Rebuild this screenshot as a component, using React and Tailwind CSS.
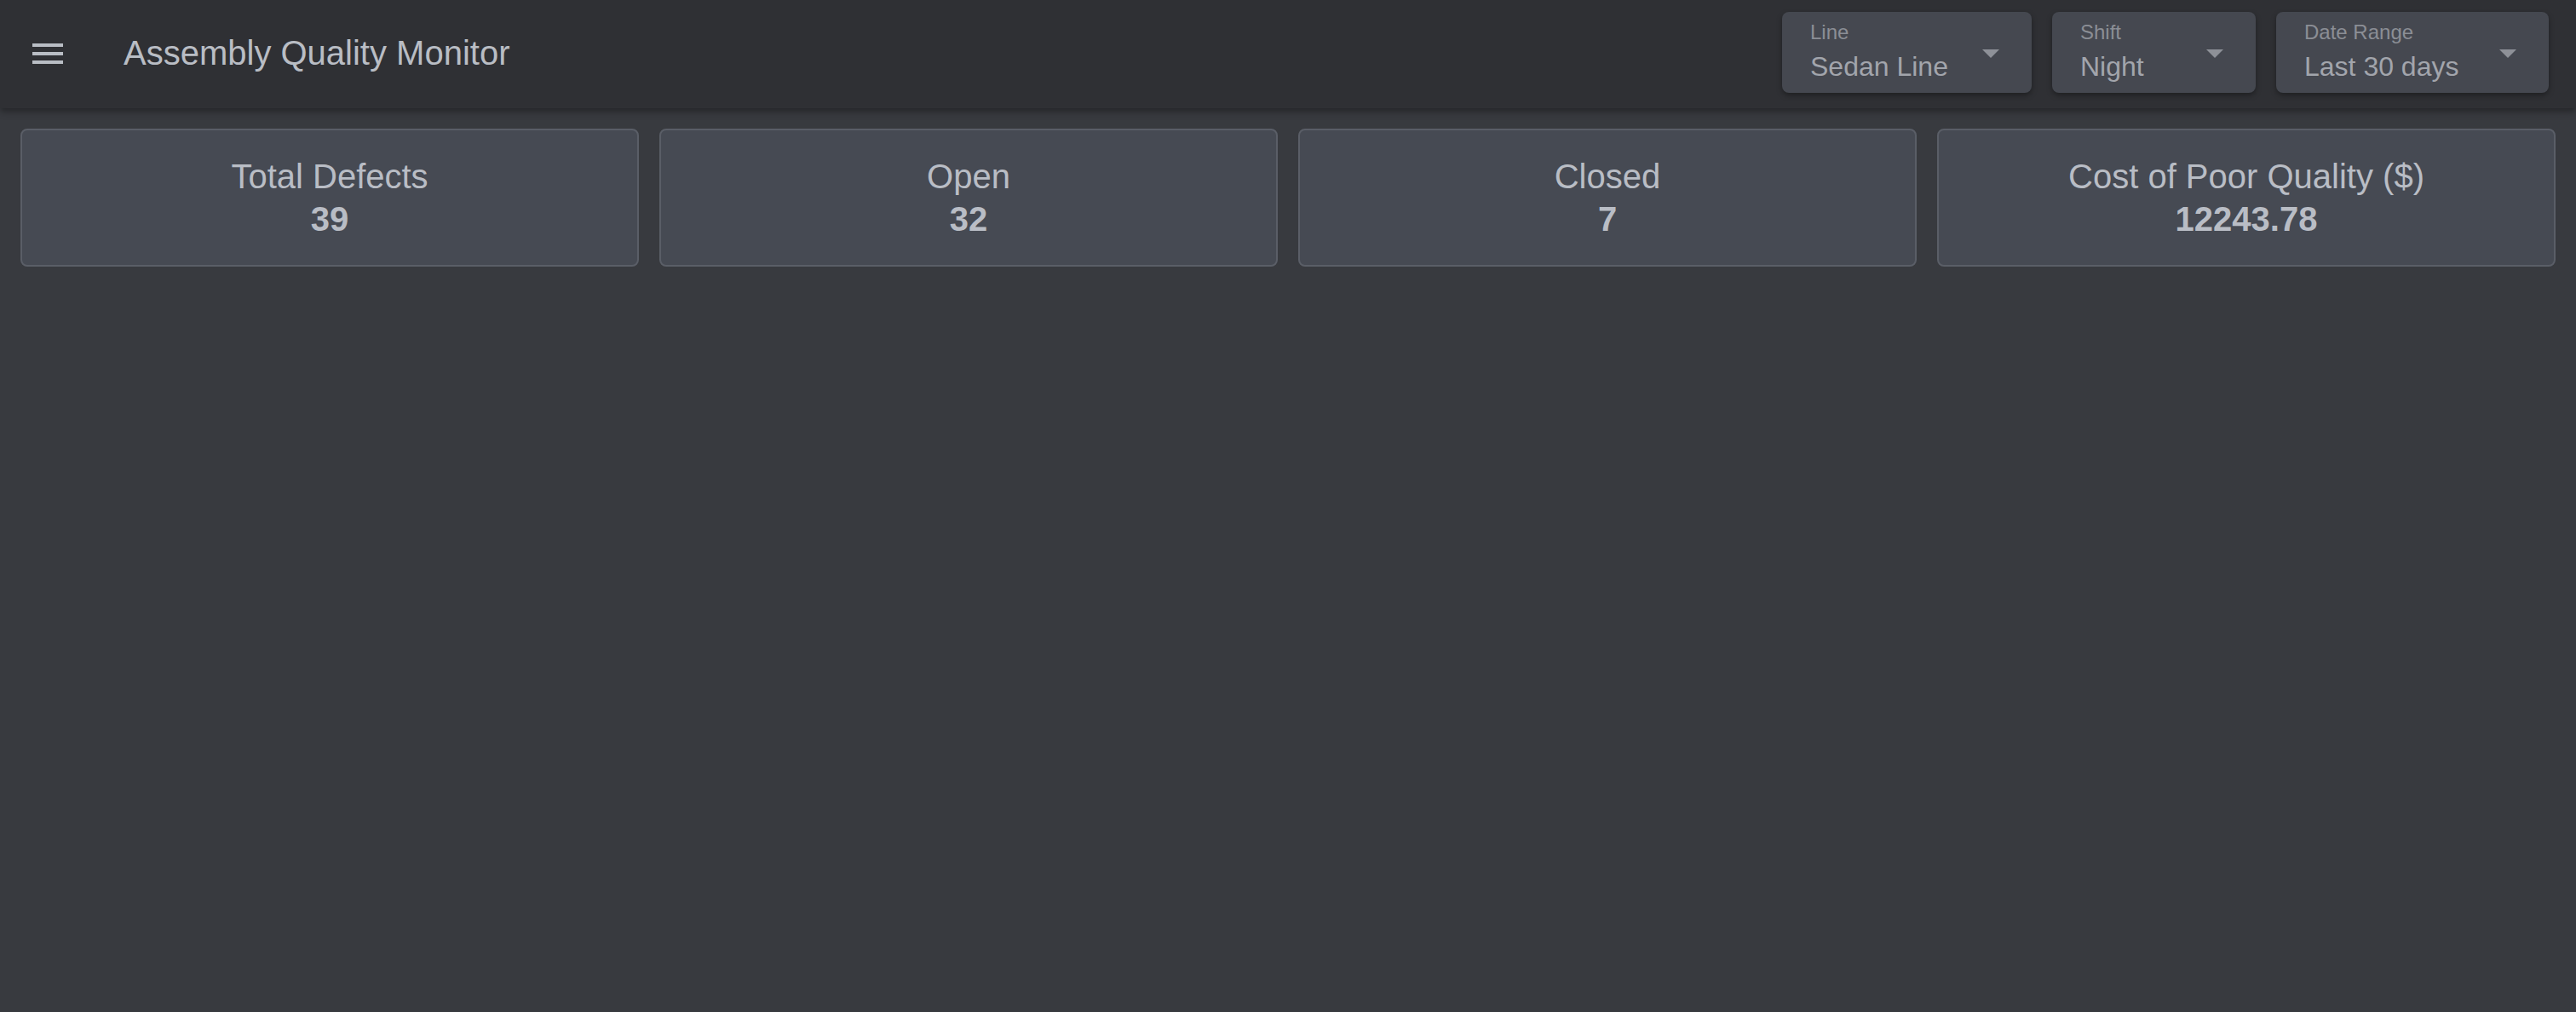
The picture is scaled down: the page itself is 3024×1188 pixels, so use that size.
import React from "react";

const font = { fontFamily: '"Liberation Sans", Arial, sans-serif' };

function Arrow() {
  return (
    <svg width="20" height="10" viewBox="0 0 20 10" className="mt-[44px] mr-[38px] shrink-0">
      <path d="M0 0 L20 0 L10 10 Z" fill="#8e9198" />
    </svg>
  );
}

function SelectBox({ label, value, width }) {
  return (
    <div className={`flex h-[95px] rounded-[8px] bg-[#454850] shadow-[0_3px_6px_rgba(0,0,0,0.35)] ${width}`}>
      <div className="flex flex-1 flex-col pl-[33px] pt-[10px]">
        <div className="text-[24px] leading-[28px] text-[#8b8e95]">{label}</div>
        <div className="mt-[7px] text-[32px] leading-[38px] text-[#a2a5ac] whitespace-nowrap">{value}</div>
      </div>
      <Arrow />
    </div>
  );
}

function Card({ title, value }) {
  return (
    <div className="flex flex-col items-center rounded-[8px] border-2 border-[#5a5e67] bg-[#464a53] py-[29px]">
      <div className="text-[40px] leading-[50px] text-[#b9bdc5]">{title}</div>
      <div className="text-[40px] leading-[50px] font-bold text-[#b9bdc5]">{value}</div>
    </div>
  );
}

export default function App() {
  return (
    <div style={font} className="min-h-[1188px] w-full bg-[#383a3f]">
      <header className="relative z-10 flex h-[127px] items-center bg-[#2f3034] shadow-[0_4px_8px_rgba(0,0,0,0.35)]">
        <svg width="36" height="24" viewBox="0 0 36 24" className="ml-[38px] mb-[2px] shrink-0">
          <rect x="0" y="0" width="36" height="4" fill="#b9bdc4" />
          <rect x="0" y="10" width="36" height="4" fill="#b9bdc4" />
          <rect x="0" y="20" width="36" height="4" fill="#b9bdc4" />
        </svg>
        <div className="ml-[71px] mb-[3px] text-[40px] text-[#b9bdc4]">Assembly Quality Monitor</div>
        <div className="ml-auto mr-[32px] flex gap-[24px] self-start mt-[14px]">
          <SelectBox label="Line" value="Sedan Line" width="w-[293px]" />
          <SelectBox label="Shift" value="Night" width="w-[239px]" />
          <SelectBox label="Date Range" value="Last 30 days" width="w-[320px]" />
        </div>
      </header>
      <main className="grid grid-cols-4 gap-[24px] p-[24px]">
        <Card title="Total Defects" value="39" />
        <Card title="Open" value="32" />
        <Card title="Closed" value="7" />
        <Card title="Cost of Poor Quality ($)" value="12243.78" />
      </main>
    </div>
  );
}
